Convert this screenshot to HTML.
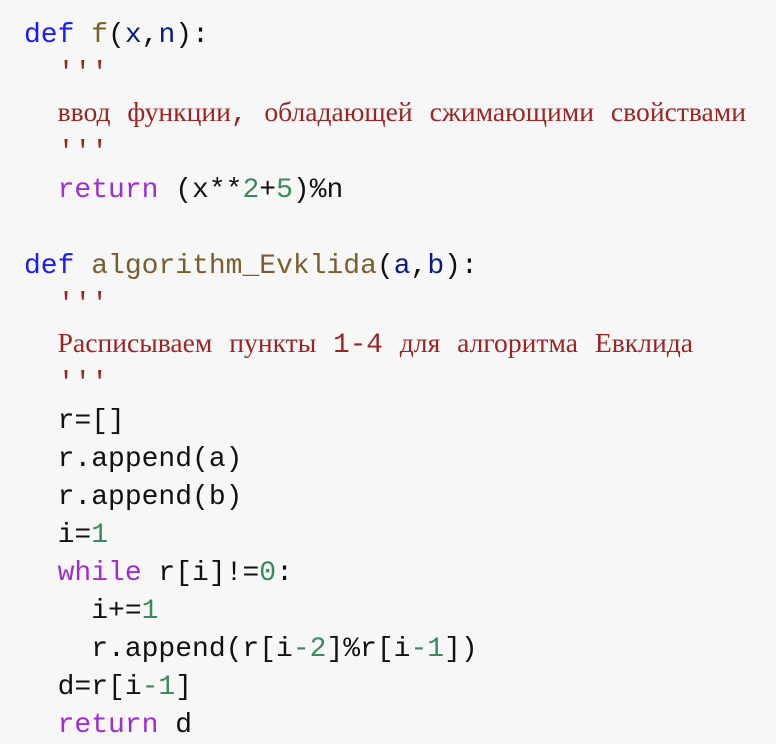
<!DOCTYPE html>
<html><head><meta charset="utf-8"><style>
html,body{margin:0;padding:0;background:#f7f7f7;width:776px;height:744px;overflow:hidden}
pre{margin:0;padding:17px 0 0 24px;font-family:"Liberation Mono",monospace;font-size:28px;line-height:38px;color:#111;white-space:pre}
.k{color:#1a1aff}.f{color:#7a5f2e}.v{color:#0a1a80}.s{color:#9b2525}.r{color:#a02dcf}.n{color:#3b8a5f}
.c{font-family:"Liberation Serif",serif;font-size:27.6px;word-spacing:10px;color:#9b2525}
</style></head><body><pre><span class="k">def</span> <span class="f">f</span>(<span class="v">x</span>,<span class="v">n</span>):
  <span class="s">'''</span>
  <span class="c">ввод функции<span style="font-family:'Liberation Mono'">,</span> обладающей сжимающими свойствами</span>
  <span class="s">'''</span>
  <span class="r">return</span> (x**<span class="n">2</span>+<span class="n">5</span>)%n

<span class="k">def</span> <span class="f">algorithm_Evklida</span>(<span class="v">a</span>,<span class="v">b</span>):
  <span class="s">'''</span>
  <span class="c">Расписываем пункты <span style="font-family:'Liberation Mono'">1-4</span> для алгоритма Евклида</span>
  <span class="s">'''</span>
  r=[]
  r.append(a)
  r.append(b)
  i=<span class="n">1</span>
  <span class="r">while</span> r[i]!=<span class="n">0</span>:
    i+=<span class="n">1</span>
    r.append(r[i<span class="n">-2</span>]%r[i<span class="n">-1</span>])
  d=r[i<span class="n">-1</span>]
  <span class="r">return</span> d</pre></body></html>
